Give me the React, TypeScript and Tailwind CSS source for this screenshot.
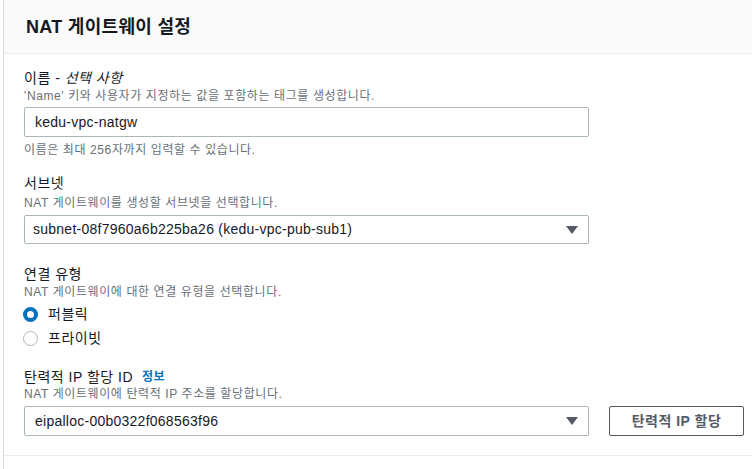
export default function App() {
  const font = { fontFamily: '"Liberation Sans", "Noto Sans CJK KR", sans-serif' };

  const Caret = () => (
    <svg width="12" height="8" viewBox="0 0 12 8" className="shrink-0">
      <path d="M0 0h12L6 8z" fill="#545b64" />
    </svg>
  );

  return (
    <div className="w-[752px] h-[469px] bg-white overflow-hidden tracking-[0.25px]" style={font}>
      <div className="ml-[3px] border-l border-[#d5dbdb] h-full text-[#16191f]">
        {/* Header */}
        <div className="h-[54px] bg-[#fafafa] border-b border-[#eaeded] pl-[22px] flex items-center">
          <h2 className="text-[18px] font-bold leading-none pt-[1px] tracking-[0.3px]">NAT 게이트웨이 설정</h2>
        </div>

        {/* Body */}
        <div className="pl-[20px] pr-[8px] pt-[15px] h-[402px] border-b border-[#eaeded]">
          {/* 이름 */}
          <div className="text-[14px] leading-[18px] tracking-[0.5px]">
            이름 - <i>선택 사항</i>
          </div>
          <div className="text-[12px] leading-[16px] text-[#687078] mt-[1px] tracking-[0.6px]">
            'Name' 키와 사용자가 지정하는 값을 포함하는 태그를 생성합니다.
          </div>
          <div className="mt-[3px] w-[565px] h-[30px] border border-[#aab7b8] rounded-[2px] flex items-center px-[10px] text-[14px]">
            kedu-vpc-natgw
          </div>
          <div className="text-[12px] leading-[16px] text-[#687078] mt-[5px] tracking-[0.6px]">
            이름은 최대 256자까지 입력할 수 있습니다.
          </div>

          {/* 서브넷 */}
          <div className="text-[14px] leading-[18px] mt-[16px] tracking-[0.5px]">서브넷</div>
          <div className="text-[12px] leading-[16px] text-[#687078] mt-[3px] tracking-[0.6px]">
            NAT 게이트웨이를 생성할 서브넷을 선택합니다.
          </div>
          <div className="mt-[4px] w-[565px] h-[29px] border border-[#aab7b8] rounded-[2px] flex items-center justify-between pl-[8px] pr-[10px] text-[14px]">
            <span>subnet-08f7960a6b225ba26 (kedu-vpc-pub-sub1)</span>
            <Caret />
          </div>

          {/* 연결 유형 */}
          <div className="text-[14px] leading-[18px] mt-[21px] tracking-[0.5px]">연결 유형</div>
          <div className="text-[12px] leading-[16px] text-[#687078] mt-[1px] tracking-[0.6px]">
            NAT 게이트웨이에 대한 연결 유형을 선택합니다.
          </div>
          <div className="flex items-center gap-[10px] mt-[3px] h-[22px] -ml-[1px]">
            <span className="w-[15px] h-[15px] rounded-full border-[4px] border-[#0073bb] bg-white" />
            <span className="text-[14px] tracking-[0.5px]">퍼블릭</span>
          </div>
          <div className="flex items-center gap-[10px] mt-[2px] h-[22px] -ml-[1px]">
            <span className="w-[15px] h-[15px] rounded-full border border-[#aab7b8] bg-white" />
            <span className="text-[14px] tracking-[0.5px]">프라이빗</span>
          </div>

          {/* 탄력적 IP */}
          <div className="text-[14px] leading-[18px] mt-[19px] flex items-center gap-[9px] tracking-[0.5px]">
            <span>탄력적 IP 할당 ID</span>
            <span className="text-[12px] font-bold text-[#0073bb]">정보</span>
          </div>
          <div className="text-[12px] leading-[16px] text-[#687078] mt-[0px] tracking-[0.6px]">
            NAT 게이트웨이에 탄력적 IP 주소를 할당합니다.
          </div>
          <div className="mt-[4px] flex items-center">
            <div className="w-[565px] h-[30px] border border-[#aab7b8] rounded-[2px] flex items-center justify-between pl-[10px] pr-[10px] text-[14px]">
              <span>eipalloc-00b0322f068563f96</span>
              <Caret />
            </div>
            <button className="ml-[20px] w-[135px] h-[30px] border border-[#545b64] rounded-[2px] text-[14px] font-bold text-[#545b64] flex items-center justify-center tracking-[0.5px]">
              탄력적 IP 할당
            </button>
          </div>
        </div>
      </div>
    </div>
  );
}
